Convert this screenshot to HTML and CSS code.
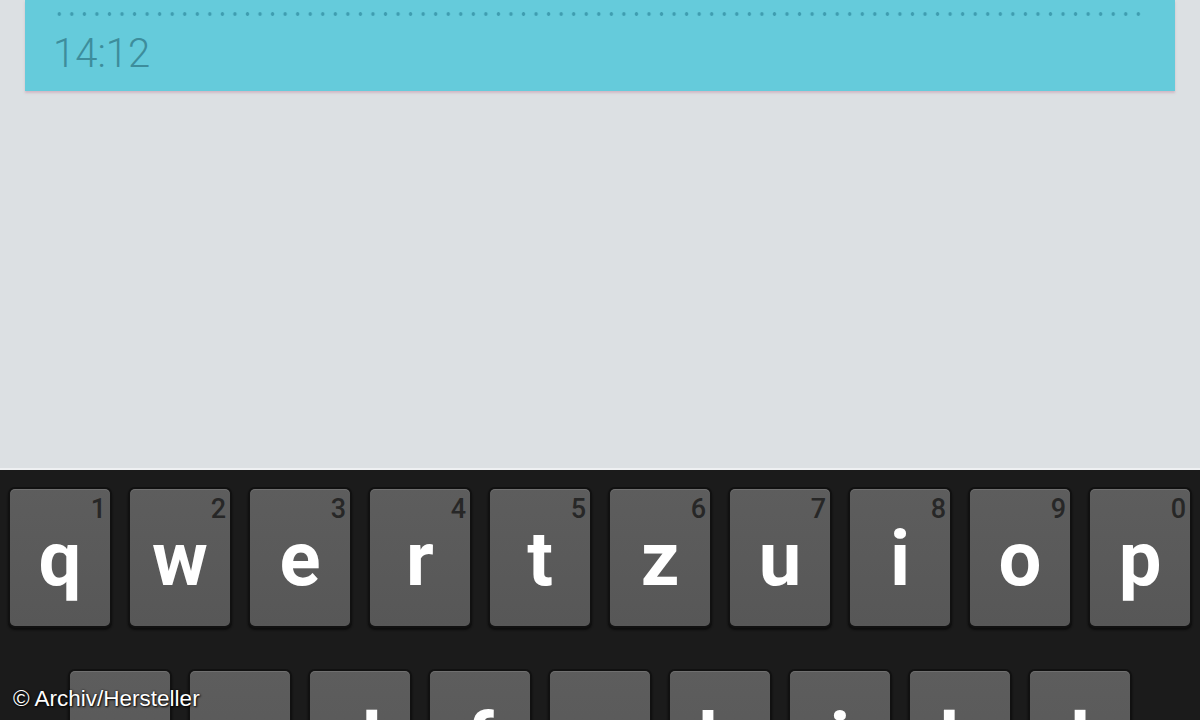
FILE: index.html
```html
<!DOCTYPE html>
<html lang="de">
<head>
<meta charset="utf-8">
<title>Tastatur</title>
<link rel="stylesheet" href="styles.css">
</head>
<body>
<div class="screen">
  <div class="card">
    <div class="dots"></div>
    <div class="time">14:12</div>
  </div>
  <div class="spacer"></div>
  <div class="keyboard">
    <div class="row row1">
      <div class="key"><span class="num">1</span><span class="ch">q</span></div>
      <div class="key"><span class="num">2</span><span class="ch">w</span></div>
      <div class="key"><span class="num">3</span><span class="ch">e</span></div>
      <div class="key"><span class="num">4</span><span class="ch">r</span></div>
      <div class="key"><span class="num">5</span><span class="ch">t</span></div>
      <div class="key"><span class="num">6</span><span class="ch">z</span></div>
      <div class="key"><span class="num">7</span><span class="ch">u</span></div>
      <div class="key"><span class="num">8</span><span class="ch">i</span></div>
      <div class="key"><span class="num">9</span><span class="ch">o</span></div>
      <div class="key"><span class="num">0</span><span class="ch">p</span></div>
    </div>
    <div class="row row2">
      <div class="key"><span class="num"></span><span class="ch">a</span></div>
      <div class="key"><span class="num"></span><span class="ch">s</span></div>
      <div class="key"><span class="num"></span><span class="ch">d</span></div>
      <div class="key"><span class="num"></span><span class="ch">f</span></div>
      <div class="key"><span class="num"></span><span class="ch">g</span></div>
      <div class="key"><span class="num"></span><span class="ch">h</span></div>
      <div class="key"><span class="num"></span><span class="ch">j</span></div>
      <div class="key"><span class="num"></span><span class="ch">k</span></div>
      <div class="key"><span class="num"></span><span class="ch">l</span></div>
    </div>
  </div>
  <div class="credit">© Archiv/Hersteller</div>
</div>
</body>
</html>
```

FILE: styles.css
```css
html, body {
  margin: 0;
  padding: 0;
}
body {
  background: #dce0e3;
  overflow: hidden;
}
.screen {
  position: relative;
  width: 1200px;
  height: 720px;
  display: flex;
  flex-direction: column;
  overflow: hidden;
}
.card {
  margin: 0 25px;
  height: 91px;
  box-sizing: border-box;
  padding: 12px 28px 0 28px;
  background: #65cbdb;
  box-shadow: 0 2px 2px rgba(200, 160, 178, 0.6);
  flex: none;
}
.dots {
  height: 4px;
  width: 1094px;
  background-image: radial-gradient(circle at center, #3f9db0 0, #3f9db0 1.5px, rgba(63,157,176,0) 2.1px);
  background-size: 12.55px 4px;
  background-repeat: repeat-x;
}
.time {
  margin-top: 18px;
  font-family: Roboto, "Liberation Sans", sans-serif;
  font-weight: 300;
  font-size: 40px;
  line-height: 40px;
  color: #3d8d9c;
}
.spacer {
  flex: 1;
}
.keyboard {
  flex: none;
  height: 252px;
  box-sizing: border-box;
  border-top: 2px solid #eef0f2;
  background: #1b1b1b;
  padding-top: 19px;
  display: flex;
  flex-direction: column;
  gap: 45px;
}
.row {
  display: flex;
  gap: 20px;
}
.row1 {
  padding-left: 10px;
}
.row2 {
  padding-left: 70px;
}
.key {
  width: 100px;
  height: 137px;
  flex: none;
  box-sizing: border-box;
  padding: 7px 4px 0 4px;
  border-radius: 5px;
  background: linear-gradient(#5d5d5d, #575757);
  box-shadow: 0 0 0 2px #111111, 0 2px 2px 2px #0d0d0d, inset 0 1px 0 rgba(255,255,255,0.12);
  display: flex;
  flex-direction: column;
}
.num {
  display: block;
  height: 27px;
  text-align: right;
  font-family: Roboto, "Liberation Sans", sans-serif;
  font-weight: 500;
  font-size: 27px;
  line-height: 27px;
  color: #272727;
}
.ch {
  display: block;
  margin-top: -2px;
  text-align: center;
  font-family: Roboto, "Liberation Sans", sans-serif;
  font-weight: 700;
  font-size: 76px;
  line-height: 76px;
  color: #ffffff;
}
.credit {
  position: absolute;
  left: 13px;
  top: 688px;
  font-family: "Liberation Sans", Arial, sans-serif;
  font-size: 22.5px;
  line-height: 22px;
  color: #ffffff;
  text-shadow: 1px 1px 2px rgba(0,0,0,0.9), 0 0 2px rgba(0,0,0,0.8);
}
```
